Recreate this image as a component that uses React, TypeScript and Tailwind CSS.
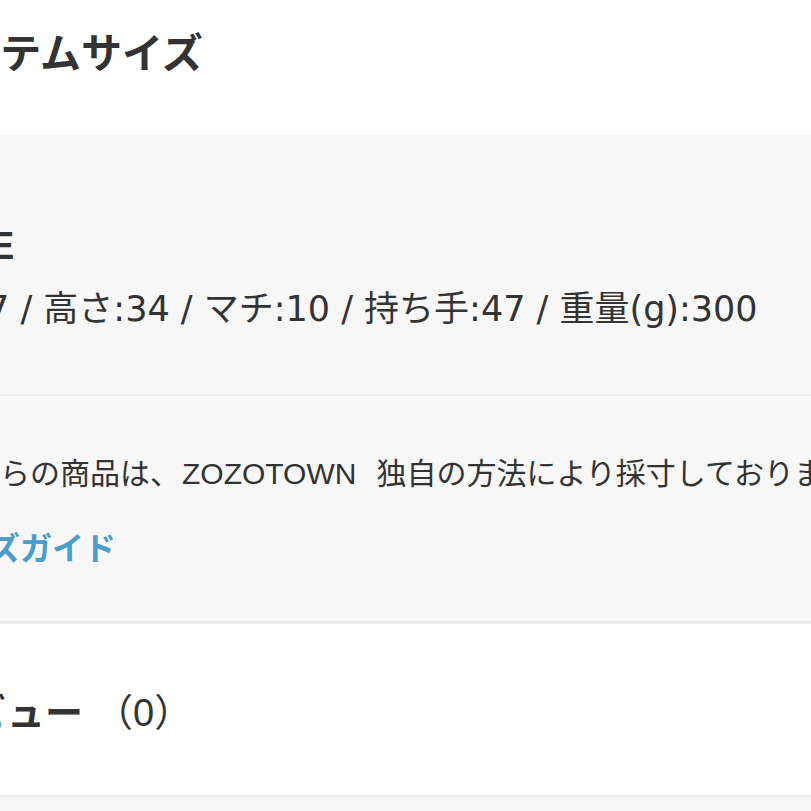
const CJK = "font-['Noto_Sans_CJK_JP','Noto_Sans',sans-serif]"
const WIDE = "font-['DejaVu_Sans','Noto_Sans_CJK_JP',sans-serif]"
const ARIAL = "font-['Liberation_Sans','Noto_Sans_CJK_JP',sans-serif]"

export default function App() {
  return (
    <div className={`w-[811px] h-[811px] overflow-hidden bg-white text-[#333] ${CJK}`}>
      {/* Title */}
      <section className="h-[135px] pt-[30px]">
        <h2 className="ml-[-79px] whitespace-nowrap text-[41px] leading-none font-bold">アイテムサイズ</h2>
      </section>

      {/* Size table */}
      <section className="h-[259px] bg-[#f7f7f7] pt-[92px]">
        <p className={`ml-[-87px] whitespace-nowrap text-[38px] leading-none font-bold ${ARIAL}`}>FREE</p>
        <p className={`ml-[-82px] mt-[27px] whitespace-nowrap text-[35px] leading-none ${WIDE}`}>
          横:37 / 高さ:34 / マチ:10 / 持ち手:47 / 重量(g):300
        </p>
      </section>
      <div className="h-[2px] bg-[#ececec]" />

      {/* Notice */}
      <section className="h-[225px] bg-[#f7f7f7] pt-[63px]">
        <p className={`ml-[-60px] whitespace-nowrap text-[30px] leading-none ${ARIAL}`}>
          これらの商品は、<span className="ml-[2px] mr-[20px]">ZOZOTOWN</span>独自の方法により採寸しております。
        </p>
        <a className="block ml-[-75px] mt-[41px] whitespace-nowrap text-[32px] leading-none font-bold text-[#4b9cc8]">
          サイズガイド
        </a>
      </section>
      <div className="h-[3px] bg-[#e8e8e8]" />

      {/* Reviews */}
      <section className="h-[171px] bg-white pt-[67px]">
        <h2 className="ml-[-69px] flex items-baseline whitespace-nowrap text-[38px] leading-none">
          <span className="font-bold">レビュー</span>
          <span className="ml-[12px]">（<span className={ARIAL}>0</span>）</span>
        </h2>
      </section>
      <div className="h-[2px] bg-[#ececec]" />
      <div className="h-[40px] bg-[#f7f7f7]" />
    </div>
  )
}
